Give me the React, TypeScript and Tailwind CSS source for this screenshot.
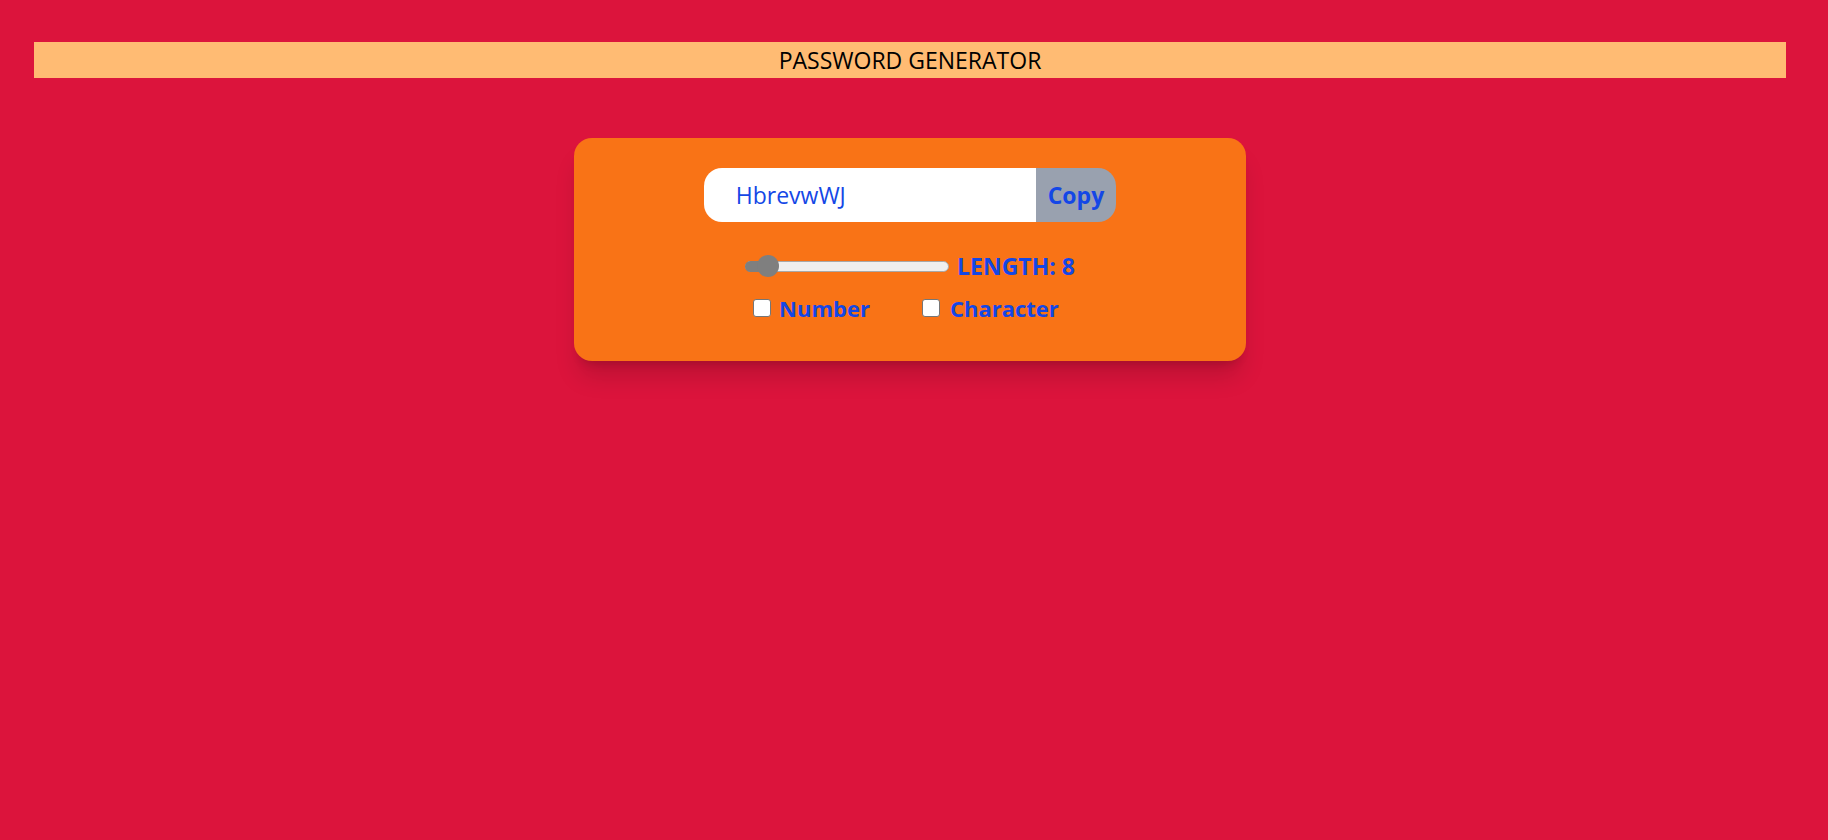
import { useState } from "react"

export default function App() {
  const [length] = useState(8)
  const [password] = useState("HbrevwWJ")

  return (
    <div className="min-h-screen w-full bg-[#dc143c] pt-[42px] font-['Open_Sans',sans-serif]">
      <div className="w-[1820px]">
        {/* Header */}
        <h1 className="mx-[34px] flex h-9 items-center justify-center bg-[#ffbb73] text-[23px] text-black">
          PASSWORD GENERATOR
        </h1>

        {/* Card */}
        <div className="mx-auto mt-[60px] w-[672px] rounded-[18px] bg-[#f97316] pt-[30px] pb-[37px] shadow-xl shadow-black/15">
          <div className="flex justify-center">
            <input
              type="text"
              value={password}
              readOnly
              className="h-[54px] w-[332px] rounded-l-[18px] bg-white pl-8 text-[23px] text-blue-700 outline-none"
            />
            <button className="h-[54px] rounded-r-[18px] bg-gray-400 px-3 text-[23px] font-bold text-blue-700">
              Copy
            </button>
          </div>

          {/* Length slider */}
          <div className="mt-[28px] flex h-8 items-center justify-center gap-2">
            <div className="relative h-[11px] w-[204px] rounded-full border border-[#a8a8a8] bg-[#efefef]">
              <div className="absolute -top-px -left-px h-[11px] w-[26px] rounded-full bg-[#7f7f7f]" />
              <div className="absolute top-[-7px] left-[11px] h-[22px] w-[22px] rounded-full bg-[#7f7f7f]" />
            </div>
            <label className="text-[23px] font-bold text-blue-700">LENGTH: {length}</label>
          </div>

          {/* Options */}
          <div className="mt-[10px] flex h-8 items-center justify-center gap-[52px] pr-2">
            <div className="flex items-center gap-2">
              <input
                type="checkbox"
                className="h-[18px] w-[18px] appearance-none rounded-[3px] border border-[#767676] bg-white"
              />
              <label className="text-[22px] font-bold text-blue-700">Number</label>
            </div>
            <div className="flex items-center gap-[10px]">
              <input
                type="checkbox"
                className="h-[18px] w-[18px] appearance-none rounded-[3px] border border-[#767676] bg-white"
              />
              <label className="text-[22px] font-bold text-blue-700">Character</label>
            </div>
          </div>
        </div>
      </div>
    </div>
  )
}
